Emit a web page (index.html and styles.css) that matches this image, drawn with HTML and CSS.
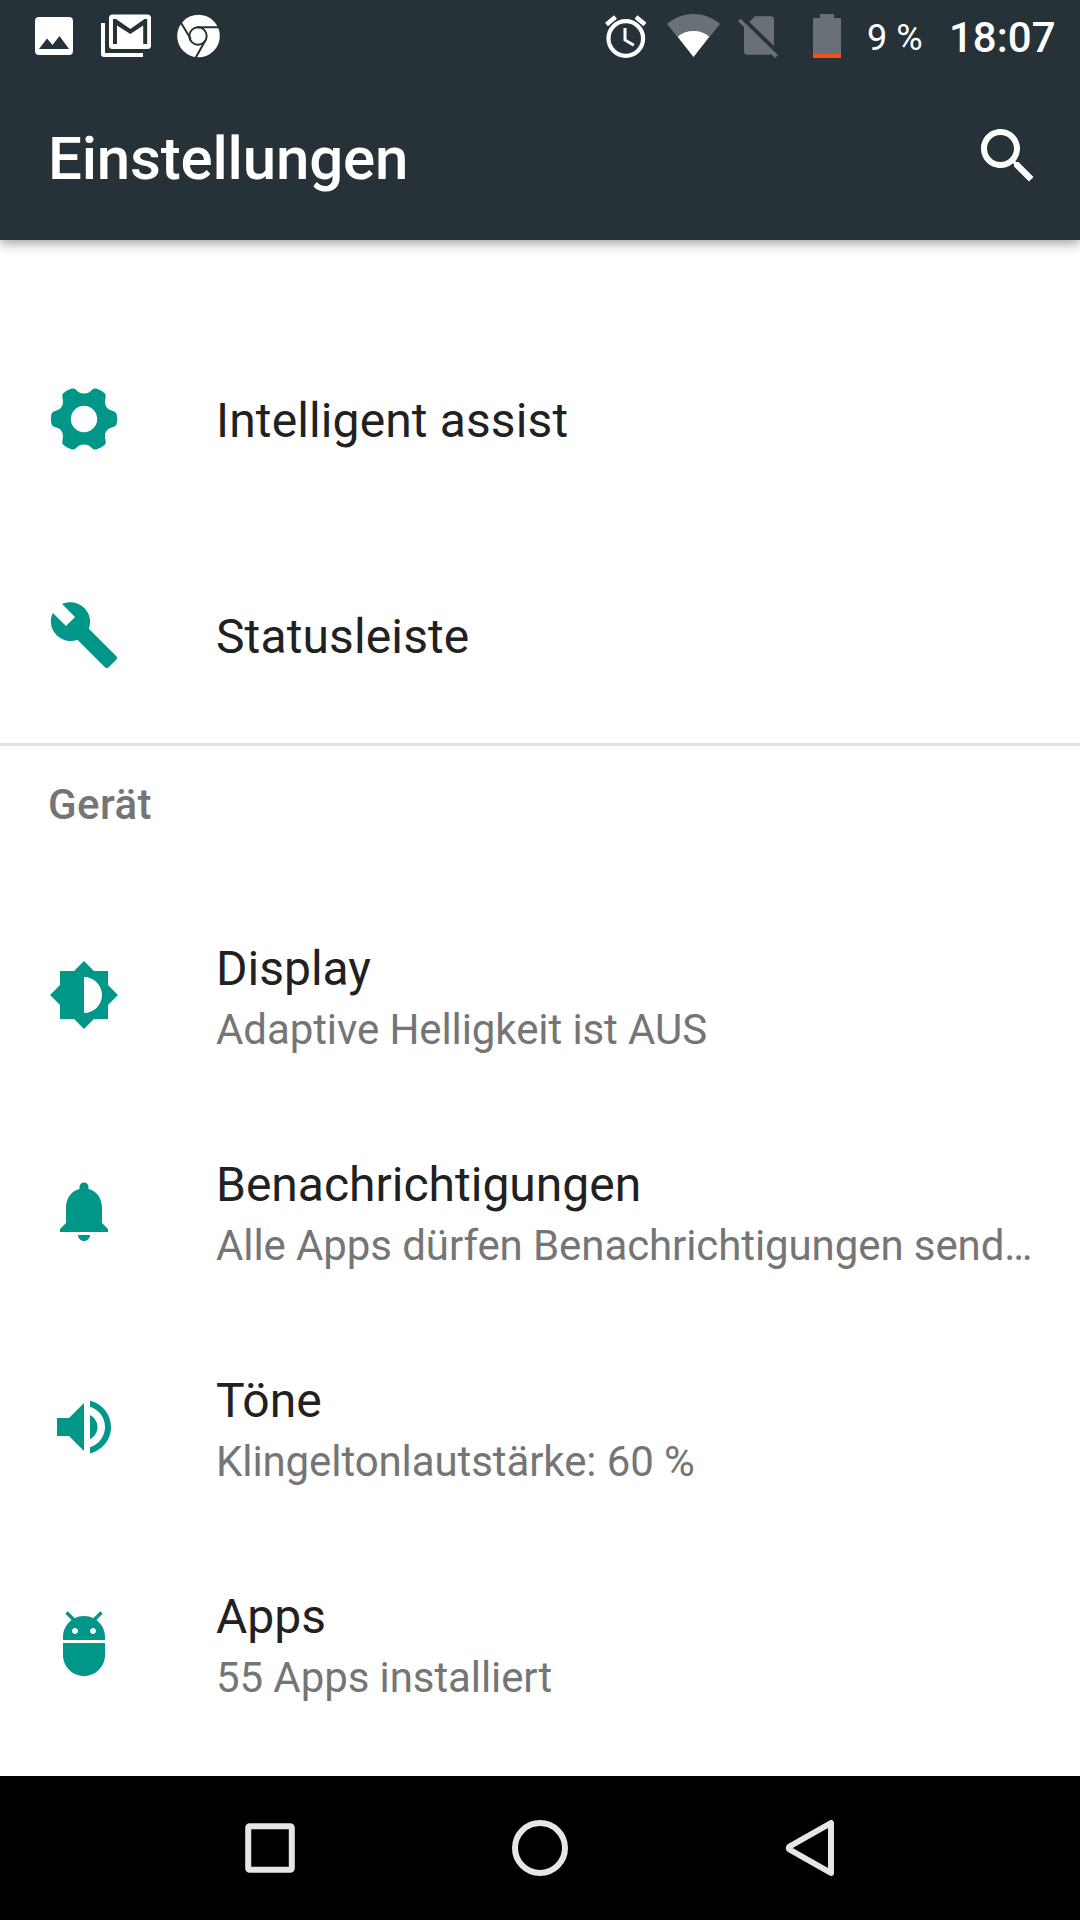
FILE: index.html
```
<!DOCTYPE html>
<html lang="de">
<head>
  <meta charset="UTF-8">
  <title>Einstellungen</title>
  <link rel="stylesheet" href="styles.css">
</head>
<body>
  <div class="screen">
    <header class="appbar">
      <div class="status">
        <svg class="photo" width="38" height="44" viewBox="0 0 38 44">
          <path fill-rule="evenodd" d="M4 3h30a4 4 0 0 1 4 4v30a4 4 0 0 1-4 4H4a4 4 0 0 1-4-4V7a4 4 0 0 1 4-4zM4 35h30L24.500 22l-7 9-5.500-6.500z"/>
        </svg>
        <svg class="gmail" width="50" height="44" viewBox="0 0 50 44">
          <path d="M0 9h4v30h38v4H3a3 3 0 0 1-3-3z"/>
          <rect x="8" y="0.500" width="42" height="34.500" rx="3.500"/>
          <path class="cut" d="M12 30V5h3l14.300 10L43.500 5h2.700v25h-4V11.500L29.300 20 16 11.500V30z"/>
        </svg>
        <svg class="chrome" width="43" height="44" viewBox="0 0 43 44">
          <circle cx="21.500" cy="22" r="21.300"/>
          <g class="lines">
            <circle cx="21" cy="22" r="8.700"/>
            <path d="M20 13.200H43M13.800 25 3.500 8M28.300 26.500 18.500 44"/>
          </g>
        </svg>
        <svg class="alarm" width="42" height="44" viewBox="0 0 42 44">
          <circle class="ring" cx="20.800" cy="24.500" r="17.300"/>
          <path class="bells" d="M1.500 10.500 10.500 3M31 3l9 7.500"/>
          <path class="hands" d="M20 14v12l8.800 5.300"/>
        </svg>
        <svg class="wifi" width="53" height="44" viewBox="0 0 53 44">
          <path class="dim" d="M26.500 43 0 10C7 4 16 0 26.500 0S46 4 53 10z"/>
          <path d="M26.500 43 10.800 22.800C15 19 20 17 26.500 17s11.500 2 15.700 5.800z"/>
        </svg>
        <svg class="sim" width="40" height="44" viewBox="0 0 40 44">
          <path class="dim" d="M11.300 8 17 2.300h15.500a3.500 3.500 0 0 1 3.500 3.500V32zM0 7.300l2.600-2.600L40 41.200 37.200 44l-4-3.700a3 3 0 0 1-1.500.4H9.500A3.500 3.500 0 0 1 6 37.200V13z"/>
        </svg>
        <svg class="battery" width="28" height="44" viewBox="0 0 28 44">
          <path class="dim" d="M0 4h7V0h14v4h7v36H0z"/>
          <path class="low" d="M0 40h28v4H0z"/>
        </svg>
        <span class="percent">9 %</span>
        <span class="clock">18:07</span>
      </div>
      <div class="toolbar">
        <h1>Einstellungen</h1>
        <svg class="search" viewBox="0 0 24 24"><path d="M15.500 14h-.79l-.28-.27C15.410 12.590 16 11.110 16 9.500 16 5.910 13.090 3 9.500 3S3 5.910 3 9.500 5.910 16 9.500 16c1.610 0 3.090-.59 4.230-1.570l.27.28v.79l5 4.990L20.490 19l-4.990-5zm-6 0C7.010 14 5 11.990 5 9.500S7.010 5 9.500 5 14 7.010 14 9.500 11.990 14 9.500 14z"/></svg>
      </div>
    </header>

    <main class="list">
      <div class="item">
        <svg class="icon" viewBox="-36 -36 72 72"><path fill-rule="evenodd" d="M0 25.500C-4 25.500-6 27-8 29.300Q-10 31-13 30.300Q-18 28.500-21 25.500Q-22.300 24-21.500 21C-20 15-22 10-27.500 8.500Q-32 7.500-32.700 4.500Q-33.500 0-32.700-4.500Q-32-7.500-27.500-8.500C-22-10-20-15-21.500-21Q-22.300-24-21-25.500Q-18-28.500-13-30.300Q-10-31-8-29.300C-6-27-4-25.500 0-25.500S6-27 8-29.300Q10-31 13-30.300Q18-28.500 21-25.500Q22.300-24 21.500-21C20-15 22-10 27.500-8.500Q32-7.500 32.700-4.500Q33.500 0 32.700 4.500Q32 7.500 27.500 8.500C22 10 20 15 21.500 21Q22.300 24 21 25.500Q18 28.500 13 30.300Q10 31 8 29.300C6 27 4 25.500 0 25.500zM0-13.200A13.200 13.200 0 1 0 0 13.200 13.200 13.200 0 1 0 0-13.200z"/></svg>
        <div class="text"><div class="title">Intelligent assist</div></div>
      </div>
      <div class="item">
        <svg class="icon" viewBox="0 0 24 24"><path d="M22.700 19l-9.100-9.100c.9-2.300.4-5-1.500-6.900-2-2-5-2.400-7.400-1.300L9 6 6 9 1.600 4.700C.4 7.100.9 10.100 2.900 12.100c1.900 1.900 4.600 2.400 6.900 1.500l9.100 9.100c.4.400 1 .4 1.400 0l2.300-2.300c.5-.4.5-1.100.1-1.400z"/></svg>
        <div class="text"><div class="title">Statusleiste</div></div>
      </div>

      <h2>Gerät</h2>

      <div class="item">
        <svg class="icon" viewBox="0 0 24 24"><path d="M20 15.310L23.310 12 20 8.690V4h-4.690L12 .69 8.690 4H4v4.690L.69 12 4 15.310V20h4.690L12 23.310 15.310 20H20v-4.690zM12 18V6c3.310 0 6 2.690 6 6s-2.690 6-6 6z"/></svg>
        <div class="text">
          <div class="title">Display</div>
          <div class="summary">Adaptive Helligkeit ist AUS</div>
        </div>
      </div>
      <div class="item">
        <svg class="icon" viewBox="0 0 24 24"><path d="M12 22c1.100 0 2-.9 2-2h-4c0 1.100.9 2 2 2zM18 16v-5c0-3.070-1.640-5.640-4.500-6.320V4c0-.83-.67-1.500-1.500-1.500s-1.500.67-1.500 1.500v.68C7.630 5.360 6 7.920 6 11v5l-2 2v1h16v-1l-2-2z"/></svg>
        <div class="text">
          <div class="title">Benachrichtigungen</div>
          <div class="summary">Alle Apps dürfen Benachrichtigungen send…</div>
        </div>
      </div>
      <div class="item">
        <svg class="icon" viewBox="0 0 24 24"><path d="M3 9v6h4l5 5V4L7 9H3zm13.500 3c0-1.770-1.020-3.290-2.500-4.030v8.050c1.480-.73 2.500-2.250 2.500-4.020zM14 3.230v2.060c2.890.86 5 3.540 5 6.710s-2.110 5.850-5 6.710v2.060c4.010-.91 7-4.490 7-8.770s-2.990-7.860-7-8.770z"/></svg>
        <div class="text">
          <div class="title">Töne</div>
          <div class="summary">Klingeltonlautstärke: 60 %</div>
        </div>
      </div>
      <div class="item">
        <svg class="icon" viewBox="0 0 24 24"><path d="M5 16c0 3.870 3.130 7 7 7s7-3.130 7-7v-4H5v4zM16.120 4.370l2.100-2.100-.82-.83-2.300 2.310C14.160 3.280 13.120 3 12 3s-2.160.28-3.090.75L6.600 1.440l-.82.83 2.100 2.100C6.140 5.640 5 7.680 5 10v1h14v-1c0-2.320-1.140-4.360-2.880-5.630zM9 9c-.55 0-1-.45-1-1s.45-1 1-1 1 .45 1 1-.45 1-1 1zm6 0c-.55 0-1-.45-1-1s.45-1 1-1 1 .45 1 1-.45 1-1 1z"/></svg>
        <div class="text">
          <div class="title">Apps</div>
          <div class="summary">55 Apps installiert</div>
        </div>
      </div>
    </main>

    <nav class="navbar">
      <svg viewBox="0 0 60 60"><rect x="8.200" y="8.200" width="43.600" height="43.600" rx="1.500"/></svg>
      <svg viewBox="0 0 60 60"><circle cx="30" cy="30" r="25"/></svg>
      <svg viewBox="0 0 60 60"><path d="M51 5v50L9.500 31.500q-1.500-1.500 0-3z"/></svg>
    </nav>
  </div>
</body>
</html>
```
FILE: styles.css
```
* {
  box-sizing: border-box;
}
body {
  margin: 0;
  font-family: Roboto, "Noto Sans", sans-serif;
  background: #fff;
}
svg {
  display: block;
  flex: none;
}
.screen {
  display: flex;
  flex-direction: column;
  width: 1080px;
  height: 1920px;
  overflow: hidden;
}

/* status bar + toolbar */
.appbar {
  flex: none;
  height: 240px;
  background: #263238;
  color: #fff;
  fill: #fff;
  box-shadow: 0 3px 12px rgba(0, 0, 0, 0.4);
}
.status {
  display: flex;
  align-items: center;
  height: 72px;
  padding-left: 35px;
  white-space: nowrap;
}
.gmail {
  margin-left: 28px;
}
.chrome {
  margin-left: 26px;
}
.alarm {
  margin-left: 385px;
}
.wifi {
  margin-left: 20px;
}
.sim {
  margin-left: 18px;
}
.battery {
  margin-left: 35px;
}
.cut {
  fill: #263238;
}
.lines {
  fill: none;
  stroke: #263238;
  stroke-width: 2;
}
.alarm path,
.alarm circle {
  fill: none;
  stroke: #fff;
}
.alarm .ring {
  stroke-width: 4.2;
}
.alarm .bells {
  stroke-width: 4.5;
}
.alarm .hands {
  stroke-width: 3;
}
.dim {
  fill: #697177;
}
.low {
  fill: #f4511e;
}
.percent {
  margin-left: 26px;
  width: 82px;
  padding-top: 3px;
  font-size: 36px;
}
.clock {
  padding-top: 3px;
  font-size: 42px;
  font-weight: 500;
}
.toolbar {
  display: flex;
  align-items: center;
  justify-content: space-between;
  height: 168px;
  padding: 0 36px 0 48px;
}
.toolbar h1 {
  margin: 0;
  padding-top: 5px;
  font-size: 60px;
  font-weight: 500;
  letter-spacing: -0.18px;
}
.search {
  width: 72px;
  height: 72px;
}

/* settings list */
.list {
  flex: 1;
  padding-top: 71px;
}
.item {
  display: flex;
  align-items: center;
  gap: 96px;
  height: 216px;
  padding: 0 48px;
}
.icon {
  width: 72px;
  height: 72px;
  fill: #009688;
}
.text {
  flex: 1;
  min-width: 0;
}
.title {
  font-size: 48px;
  line-height: 69px;
  color: #212121;
}
.title:only-child {
  padding-top: 3px;
  letter-spacing: 0.12px;
}
.summary {
  font-size: 42px;
  line-height: 53px;
  letter-spacing: -0.09px;
  color: #757575;
  white-space: nowrap;
}
.list h2 {
  margin: 0;
  height: 144px;
  padding-left: 48px;
  border-top: 3px solid #e0e0e0;
  font-size: 42px;
  font-weight: 500;
  line-height: 117px;
  letter-spacing: 0.4px;
  color: #757575;
}

/* system buttons */
.navbar {
  display: flex;
  align-items: center;
  justify-content: space-between;
  flex: none;
  height: 144px;
  padding: 0 240px;
  background: #000;
}
.navbar svg {
  width: 60px;
  height: 60px;
  fill: none;
  stroke: #e6e6e6;
  stroke-width: 6;
  stroke-linejoin: round;
}
```
